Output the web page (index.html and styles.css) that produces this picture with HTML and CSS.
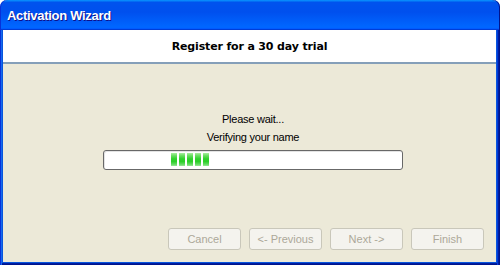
FILE: index.html
```html
<!DOCTYPE html>
<html>
<head>
<meta charset="utf-8">
<title>Activation Wizard</title>
<link rel="stylesheet" href="styles.css">
</head>
<body>
<div class="window">
  <div class="titlebar"><span class="title">Activation Wizard</span></div>
  <div class="frame">
    <div class="client">
      <div class="header">Register for a 30 day trial</div>
      <div class="content">
        <div class="status">
          <p class="line">Please wait...</p>
          <p class="line second">Verifying your name</p>
          <div class="progress">
            <div class="chunks">
              <span class="chunk"></span><span class="chunk"></span><span class="chunk"></span><span class="chunk"></span><span class="chunk"></span>
            </div>
          </div>
        </div>
        <div class="buttons">
          <button class="btn" disabled>Cancel</button>
          <button class="btn" disabled>&lt;- Previous</button>
          <button class="btn" disabled>Next -&gt;</button>
          <button class="btn" disabled>Finish</button>
        </div>
      </div>
    </div>
  </div>
</div>
</body>
</html>
```

FILE: styles.css
```css
html, body {
  margin: 0;
  padding: 0;
  background: #ffffff;
}

.window {
  width: 500px;
  height: 265px;
  display: flex;
  flex-direction: column;
  font-family: "Liberation Sans", Arial, sans-serif;
}

.titlebar {
  height: 30px;
  box-sizing: border-box;
  padding: 1px 0 0 7px;
  display: flex;
  align-items: center;
  border-radius: 7px 7px 0 0;
  background: linear-gradient(180deg, #0997ff 0%, #0053ee 8%, #0050ee 40%, #0066ff 88%, #0066ff 93%, #005bff 95%, #003dd7 96%, #003dd7 100%);
  box-shadow: inset 1px 0 #0831d9, inset -1px 0 #00138c;
}

.title {
  color: #ffffff;
  font-weight: bold;
  font-size: 13px;
  letter-spacing: -0.3px;
  line-height: 28px;
  text-shadow: 1px 1px #0f1089;
}

.frame {
  flex: 1;
  display: flex;
  padding: 0 4px 3px 3px;
  background: #0855dd;
  box-shadow:
    inset 1px 0 #0831d9,
    inset 2px 0 #166aee,
    inset -1px 0 #00138c,
    inset -2px 0 #001ea0,
    inset -3px 0 #003bda,
    inset 0 -1px #00138c,
    inset 0 -2px #001ea0;
}

.client {
  flex: 1;
  display: flex;
  flex-direction: column;
  background: #ece9d8;
}

.header {
  height: 34px;
  box-sizing: border-box;
  padding-top: 1px;
  background: #ffffff;
  border-bottom: 2px solid #859fb9;
  display: flex;
  align-items: center;
  justify-content: center;
  font-family: "DejaVu Sans", sans-serif;
  font-weight: bold;
  font-size: 11px;
  letter-spacing: -0.15px;
  color: #000000;
}

.content {
  flex: 1;
  display: flex;
  flex-direction: column;
  justify-content: space-between;
}

.status {
  margin-left: 100px;
  width: 300px;
  padding-top: 49px;
  text-align: center;
  font-size: 11px;
  color: #000000;
}

.line {
  margin: 0;
  line-height: 13px;
  letter-spacing: -0.25px;
}

.second {
  margin-top: 5px;
}

.progress {
  margin-top: 6px;
  height: 20px;
  box-sizing: border-box;
  border: 1px solid #686868;
  border-radius: 3px;
  background: #ffffff;
  box-shadow: inset 1px 1px #e3e3e3;
  padding: 2px 0 3px 67px;
  display: flex;
}

.chunks {
  display: flex;
  gap: 2px;
}

.chunk {
  width: 6px;
  height: 13px;
  background: linear-gradient(180deg, #a8eea0 0%, #6ade62 20%, #2fd12c 45%, #2bcf28 65%, #5cd95a 85%, #98e696 100%);
}

.buttons {
  display: flex;
  justify-content: flex-end;
  gap: 8px;
  padding: 0 12px 12px 0;
}

.btn {
  width: 73px;
  height: 22px;
  box-sizing: border-box;
  margin: 0;
  padding: 0;
  background: #f4f3ee;
  border: 1px solid #c9c7ba;
  border-radius: 3px;
  color: #aca899;
  font-family: "Liberation Sans", Arial, sans-serif;
  font-size: 11px;
}
```
